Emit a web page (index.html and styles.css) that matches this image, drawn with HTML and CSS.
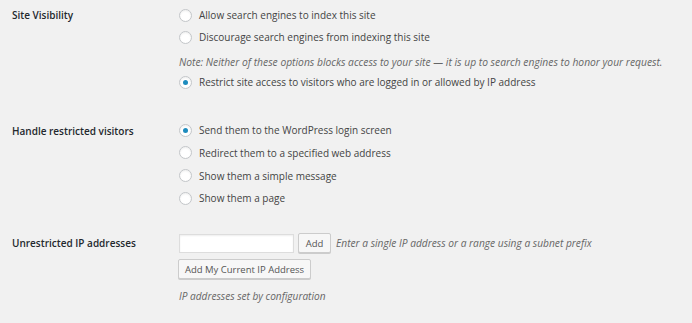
FILE: index.html
```html
<!DOCTYPE html>
<html>
<head>
<meta charset="utf-8">
<link rel="stylesheet" href="styles.css">
</head>
<body>
<div class="form">
  <div class="row row-vis">
    <div class="label">Site Visibility</div>
    <div class="field">
      <label class="opt"><span class="radio"></span>Allow search engines to index this site</label>
      <label class="opt"><span class="radio"></span>Discourage search engines from indexing this site</label>
      <p class="note">Note: Neither of these options blocks access to your site — it is up to search engines to honor your request.</p>
      <label class="opt"><span class="radio checked"></span>Restrict site access to visitors who are logged in or allowed by IP address</label>
    </div>
  </div>
  <div class="row row-handle">
    <div class="label">Handle restricted visitors</div>
    <div class="field">
      <label class="opt"><span class="radio checked"></span>Send them to the WordPress login screen</label>
      <label class="opt"><span class="radio"></span>Redirect them to a specified web address</label>
      <label class="opt"><span class="radio"></span>Show them a simple message</label>
      <label class="opt"><span class="radio"></span>Show them a page</label>
    </div>
  </div>
  <div class="row row-ip">
    <div class="label">Unrestricted IP addresses</div>
    <div class="field">
      <div class="ip-line">
        <span class="input"></span>
        <span class="btn btn-add">Add</span>
        <span class="help">Enter a single IP address or a range using a subnet prefix</span>
      </div>
      <div class="btn btn-current">Add My Current IP Address</div>
      <p class="note config">IP addresses set by configuration</p>
    </div>
  </div>
</div>
</body>
</html>
```
FILE: styles.css
```css
html, body {
  margin: 0;
  padding: 0;
  background: #f1f1f1;
}
body {
  width: 692px;
  height: 323px;
  overflow: hidden;
  font-family: "Open Sans", "Noto Sans", sans-serif;
  font-size: 10px;
  color: #444;
}
.form {
  padding-top: 8px;
}
.row {
  display: grid;
  grid-template-columns: 167px 1fr;
}
.row-handle { margin-top: 26px; }
.row-ip { margin-top: 19px; }
.label {
  padding-left: 12px;
  font-weight: 600;
  color: #23282d;
  line-height: 14px;
}
.row-handle .label { padding-top: 1px; }
.row-ip .label { padding-top: 3px; }
.field {
  display: flex;
  flex-direction: column;
  align-items: flex-start;
}
.opt {
  display: flex;
  align-items: center;
  height: 14px;
  margin-bottom: 8px;
  white-space: nowrap;
}
.row-handle .opt {
  margin-bottom: 8.8px;
}
.radio {
  width: 11px;
  height: 11px;
  border: 1px solid #c3c6c9;
  border-radius: 50%;
  background: #fff;
  box-shadow: inset 0 1px 2px rgba(0,0,0,0.07);
  margin-left: 12px;
  margin-right: 7px;
  position: relative;
  flex: none;
}
.radio.checked::after {
  content: "";
  position: absolute;
  left: 3px;
  top: 3px;
  width: 5px;
  height: 5px;
  border-radius: 50%;
  background: #1e8cbe;
}
.note {
  margin: 3px 0 6px 12px;
  font-style: italic;
  color: #666;
  font-size: 10.3px;
  line-height: 14px;
  white-space: nowrap;
}
.ip-line {
  display: flex;
  align-items: center;
  margin-left: 12px;
}
.input {
  width: 113px;
  height: 17px;
  background: #fff;
  border: 1px solid #ddd;
  box-shadow: inset 0 1px 2px rgba(0,0,0,0.07);
}
.btn {
  display: inline-flex;
  align-items: center;
  justify-content: center;
  background: #f7f7f7;
  border: 1px solid #ccc;
  border-radius: 2px;
  box-shadow: 0 1px 0 #ccc;
  color: #555;
  font-size: 9.5px;
  height: 17px;
}
.btn-add {
  width: 31px;
  height: 18px;
  margin-left: 4px;
}
.help {
  margin-left: 5px;
  font-style: italic;
  color: #666;
  font-size: 10.2px;
}
.btn-current {
  margin: 6px 0 0 11px;
  width: 131px;
  height: 18px;
}
.note.config {
  margin-top: 10px;
  font-size: 10.1px;
}
```
